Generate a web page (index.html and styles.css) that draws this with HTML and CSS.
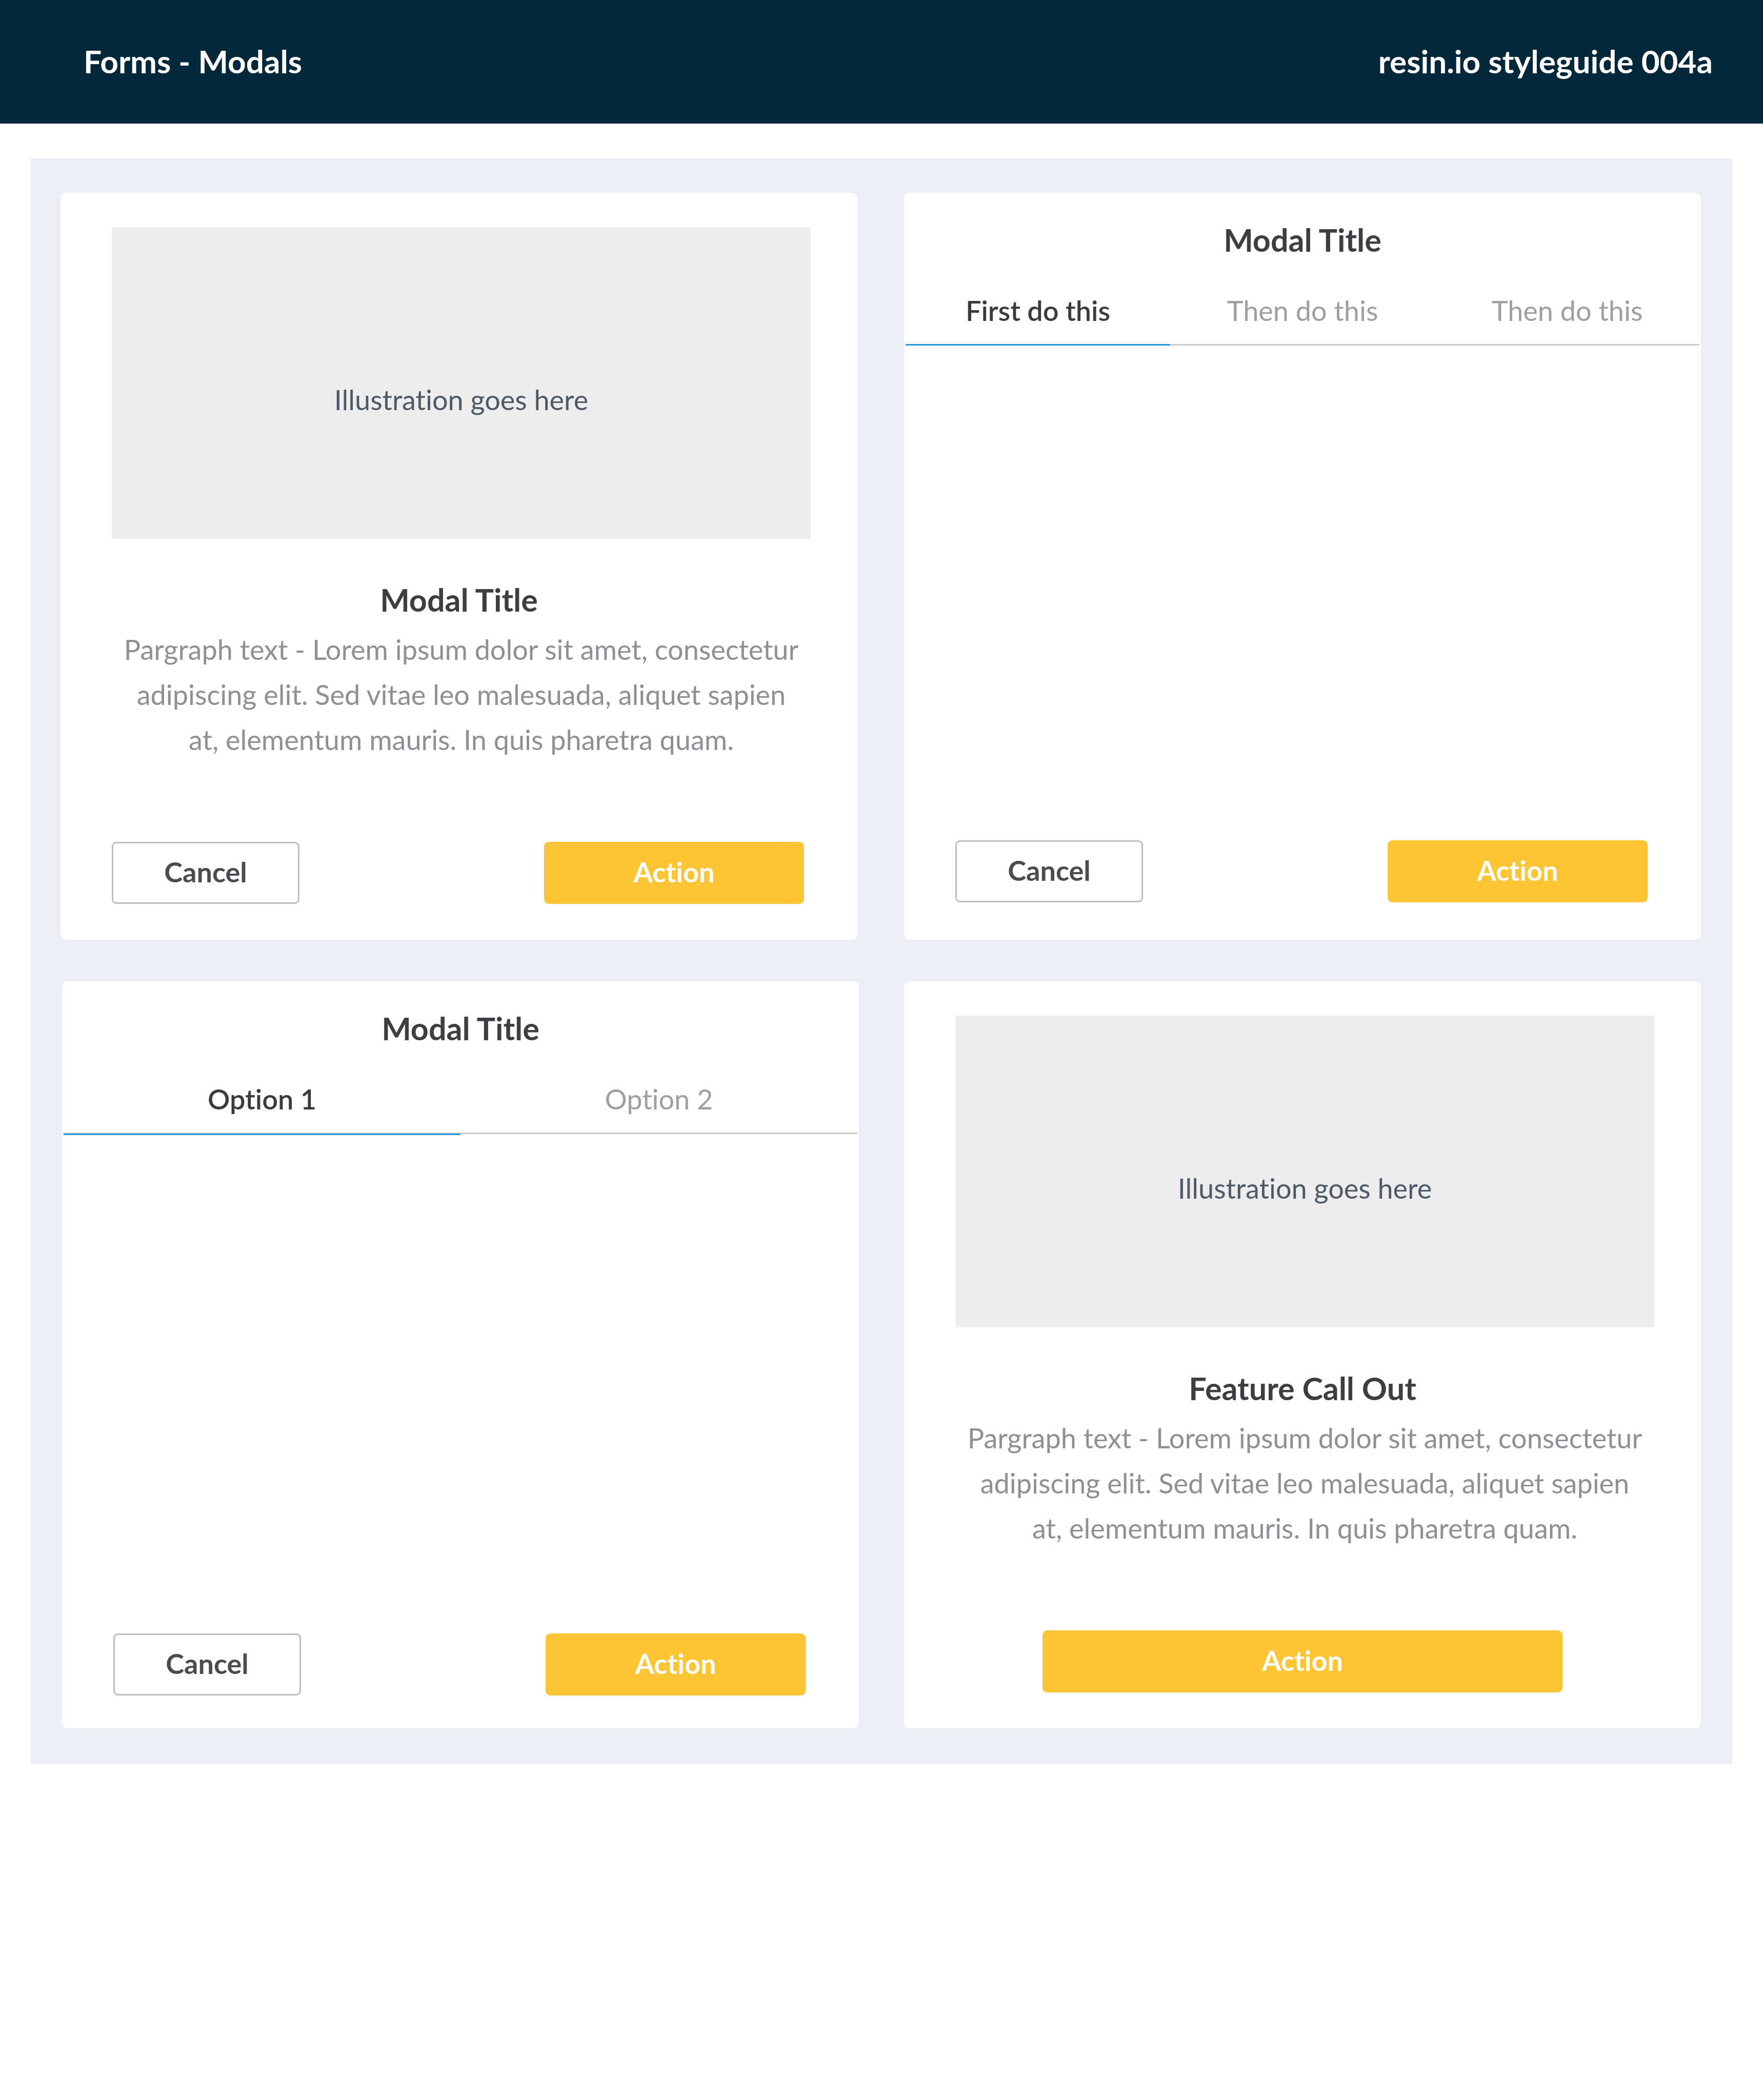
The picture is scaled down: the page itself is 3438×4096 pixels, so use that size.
FILE: index.html
```
<!DOCTYPE html>
<html lang="en">
<head>
  <meta charset="utf-8">
  <title>Forms - Modals</title>
  <link rel="stylesheet" href="styles.css">
</head>
<body>
  <header class="topbar">
    <h1 class="topbar-title">Forms - Modals</h1>
    <p class="topbar-title">resin.io styleguide 004a</p>
  </header>

  <main class="board">
    <div class="row row-wide">
      <section class="modal">
        <div class="illustration">Illustration goes here</div>
        <h2 class="modal-title">Modal Title</h2>
        <p class="modal-text">Pargraph text - Lorem ipsum dolor sit amet, consectetur<br>adipiscing elit. Sed vitae leo malesuada, aliquet sapien<br>at, elementum mauris. In quis pharetra quam.</p>
        <footer class="actions">
          <button type="button" class="btn btn-cancel">Cancel</button>
          <button type="button" class="btn btn-action">Action</button>
        </footer>
      </section>

      <section class="modal modal-steps">
        <h2 class="modal-title">Modal Title</h2>
        <div class="tabs" role="tablist">
          <button type="button" class="tab tab-active" role="tab" aria-selected="true">First do this</button>
          <button type="button" class="tab" role="tab" aria-selected="false">Then do this</button>
          <button type="button" class="tab" role="tab" aria-selected="false">Then do this</button>
        </div>
        <footer class="actions">
          <button type="button" class="btn btn-cancel">Cancel</button>
          <button type="button" class="btn btn-action">Action</button>
        </footer>
      </section>
    </div>

    <div class="row">
      <section class="modal modal-options">
        <h2 class="modal-title">Modal Title</h2>
        <div class="tabs" role="tablist">
          <button type="button" class="tab tab-active" role="tab" aria-selected="true">Option 1</button>
          <button type="button" class="tab" role="tab" aria-selected="false">Option 2</button>
        </div>
        <footer class="actions">
          <button type="button" class="btn btn-cancel">Cancel</button>
          <button type="button" class="btn btn-action">Action</button>
        </footer>
      </section>

      <section class="modal">
        <div class="illustration">Illustration goes here</div>
        <h2 class="modal-title">Feature Call Out</h2>
        <p class="modal-text">Pargraph text - Lorem ipsum dolor sit amet, consectetur<br>adipiscing elit. Sed vitae leo malesuada, aliquet sapien<br>at, elementum mauris. In quis pharetra quam.</p>
        <footer class="actions actions-single">
          <button type="button" class="btn btn-action">Action</button>
        </footer>
      </section>
    </div>
  </main>
</body>
</html>
```
FILE: styles.css
```
* {
  box-sizing: border-box;
}

body {
  margin: 0;
  background: #fff;
  font-family: Lato, "Open Sans", sans-serif;
  font-size: 54px;
  font-variant-ligatures: none;
  line-height: 88px;
}

h1,
h2,
p {
  margin: 0;
}

button {
  font: inherit;
  font-variant-ligatures: none;
  cursor: pointer;
}

/* Top bar */

.topbar {
  display: flex;
  justify-content: space-between;
  align-items: center;
  padding: 75px 98px 78px 163px;
  background: #04273a;
  color: #fff;
}

.topbar-title {
  font-size: 62px;
  font-weight: 700;
}

/* Board with the modals */

.board {
  display: flex;
  flex-direction: column;
  gap: 81px;
  margin: 68px 60px;
  padding: 67px 61px 70px;
  background: #eceef6;
}

.row {
  display: flex;
  gap: 88px;
}

.row-wide {
  gap: 91px;
  margin-left: -3px;
}

.modal {
  display: flex;
  flex: 1;
  flex-direction: column;
  min-height: 1457px;
  padding: 67px 0 70px;
  border-radius: 11px;
  background: #fff;
  text-align: center;
}

.modal-steps {
  padding: 48px 0 73px;
}

.modal-options {
  padding: 48px 0 64px;
}

.illustration {
  display: flex;
  justify-content: center;
  align-items: center;
  height: 608px;
  margin: 0 91px 75px 100px;
  padding-top: 66px;
  background: #ededed;
  color: #4d5a66;
}

.modal-title {
  color: #3c3e42;
  font-size: 61px;
  font-weight: 700;
}

.modal-text {
  margin: 9px 91px 0 100px;
  color: #8f8f95;
}

/* Tabs */

.tabs {
  display: flex;
  align-items: flex-start;
  margin: 50px 3px 0;
}

.tab {
  flex: 1;
  padding: 0 0 21px;
  border: 0;
  border-bottom: 3px solid #cbcccb;
  background: none;
  color: #9f9fa2;
}

.tab-active {
  border-bottom-color: #2298dd;
  color: #3a3b40;
  font-weight: 600;
}

.modal-options .tab-active {
  border-bottom: 2px solid #cbcccb;
  box-shadow: 0 3px 0 #2298dd;
}

/* Buttons */

.actions {
  display: flex;
  justify-content: space-between;
  margin-top: auto;
  padding: 0 104px 0 100px;
}

.actions-single {
  padding: 0 270px;
}

.btn {
  height: 121px;
  padding: 0 0 4px;
  border: 0;
  border-radius: 9px;
  font-weight: 700;
}

.btn-cancel {
  width: 366px;
  border: 3px solid #bdbdbf;
  background: #fff;
  color: #4a4c52;
}

.btn-action {
  width: 507px;
  background: #fbc536;
  color: #fff;
}

.actions-single .btn-action {
  width: 100%;
}
```
